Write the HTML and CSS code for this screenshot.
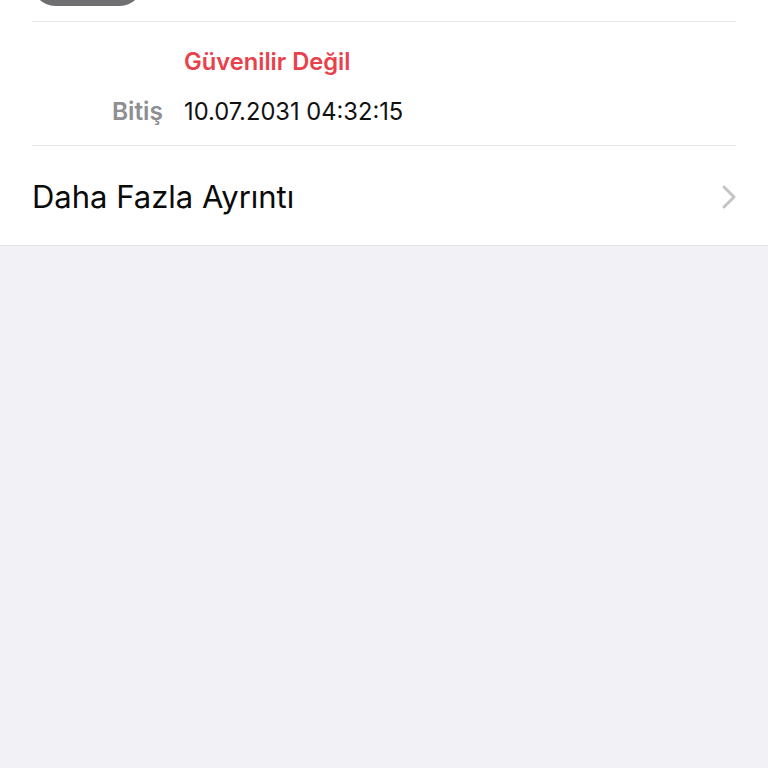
FILE: index.html
```html
<!DOCTYPE html>
<html lang="tr">
<head>
<meta charset="utf-8">
<link rel="stylesheet" href="styles.css">
</head>
<body>
<div class="card">
  <div class="top">
    <div class="badge"></div>
  </div>
  <div class="details">
    <div class="row"><span class="label"></span><span class="warn">Güvenilir Değil</span></div>
    <div class="row"><span class="label">Bitiş</span><span class="value">10.07.2031 04:32:15</span></div>
  </div>
  <div class="more">
    <span class="more-text">Daha Fazla Ayrıntı</span>
    <svg class="chev" width="16" height="24" viewBox="0 0 16 24"><path d="M3 2 L13 12 L3 22" fill="none" stroke="#c4c4c7" stroke-width="3" stroke-linecap="round" stroke-linejoin="round"/></svg>
  </div>
</div>
</body>
</html>
```
FILE: styles.css
```css
html, body {
  margin: 0;
  padding: 0;
  background: #f1f1f6;
  font-family: "Inter", "Liberation Sans", sans-serif;
}
.card {
  background: #ffffff;
  border-bottom: 1px solid #e3e3e7;
  padding-left: 32px;
}
.top {
  height: 21px;
  border-bottom: 1.5px solid #e6e6ea;
  margin-right: 32px;
  position: relative;
}
.badge {
  position: absolute;
  left: 1px;
  top: -30px;
  width: 109px;
  height: 36px;
  background: #6f6f72;
  border-radius: 0 0 22px 22px;
}
.details {
  margin-right: 32px;
  padding: 21px 0 15px;
  border-bottom: 1.5px solid #e6e6ea;
  display: flex;
  flex-direction: column;
  gap: 11px;
}
.row {
  display: flex;
  align-items: baseline;
  gap: 21px;
  height: 38px;
  line-height: 38px;
}
.label {
  width: 131px;
  text-align: right;
  color: #8e8e93;
  font-size: 24.5px;
  font-weight: 600;
}
.warn {
  color: #e8414b;
  font-size: 23.7px;
  font-weight: 600;
}
.value {
  color: #111111;
  font-size: 23.7px;
  font-weight: 400;
}
.more {
  height: 99px;
  display: flex;
  align-items: center;
  justify-content: space-between;
  padding-right: 31px;
}
.more-text {
  font-size: 31px;
  color: #0a0a0a;
  margin-top: 2px;
}
.chev {
  display: block;
  margin-top: 2px;
}
```
